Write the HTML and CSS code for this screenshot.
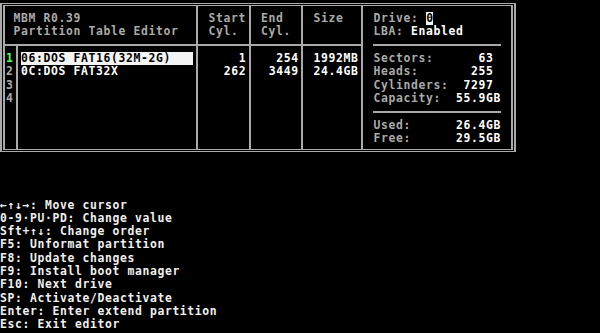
FILE: index.html
```html
<!DOCTYPE html>
<html>
<head>
<meta charset="utf-8">
<title>MBM Partition Table Editor</title>
<link rel="stylesheet" href="styles.css">
</head>
<body>
<div class="screen">
  <div class="frame">
    <div class="table">
      <div class="head title">MBM R0.39<br>Partition Table Editor</div>
      <div class="head divided start-h">Start<br>Cyl.</div>
      <div class="head divided end-h">End<br>Cyl.</div>
      <div class="head divided size-h">Size</div>

      <div class="cell nums">
        <div class="active">1</div>
        <div>2</div>
        <div>3</div>
        <div>4</div>
      </div>
      <div class="cell divided types">
        <div class="type selected">06:DOS FAT16(32M-2G)</div>
        <div class="type">0C:DOS FAT32X</div>
      </div>
      <div class="cell divided start">
        <div>1</div>
        <div>262</div>
      </div>
      <div class="cell divided end">
        <div>254</div>
        <div>3449</div>
      </div>
      <div class="cell divided size">
        <div>1992MB</div>
        <div>24.4GB</div>
      </div>
    </div>

    <div class="panel">
      <div class="line">Drive: <span class="cursor">0</span></div>
      <div class="line">LBA: <span class="bright">Enabled</span></div>
      <div class="rule"></div>
      <div class="stat"><span>Sectors:</span><span class="val int">63</span></div>
      <div class="stat"><span>Heads:</span><span class="val int">255</span></div>
      <div class="stat"><span>Cylinders:</span><span class="val int">7297</span></div>
      <div class="stat"><span>Capacity:</span><span class="val">55.9GB</span></div>
      <div class="rule"></div>
      <div class="stat"><span>Used:</span><span class="val">26.4GB</span></div>
      <div class="stat"><span>Free:</span><span class="val">29.5GB</span></div>
    </div>
  </div>

  <div class="help">
    <div>←↑↓→: Move cursor</div>
    <div>0-9·PU·PD: Change value</div>
    <div>Sft+↑↓: Change order</div>
    <div>F5: Unformat partition</div>
    <div>F8: Update changes</div>
    <div>F9: Install boot manager</div>
    <div>F10: Next drive</div>
    <div>SP: Activate/Deactivate</div>
    <div>Enter: Enter extend partition</div>
    <div>Esc: Exit editor</div>
  </div>
</div>
</body>
</html>
```

FILE: styles.css
```css
* {
  box-sizing: border-box;
  margin: 0;
  padding: 0;
}

html, body {
  background: #000;
}

body {
  width: 600px;
  height: 333px;
  overflow: hidden;
  font-family: "DejaVu Sans Mono", "Liberation Mono", monospace;
  font-weight: bold;
  font-size: 11.4px;
  letter-spacing: 0.637px;
  line-height: 13.32px;
  color: #aaaaaa;
}

.screen {
  width: 600px;
  height: 333px;
}

.frame {
  display: flex;
  width: 516px;
  margin-top: 3px;
  border-top: 3px double #aaaaaa;
  border-bottom: 3px double #aaaaaa;
  border-left: 5px double #aaaaaa;
  border-right: 5px double #aaaaaa;
}

.table {
  display: grid;
  grid-template-columns: 11px 180px 53px 52px 60px;
  grid-template-rows: 40px 103px;
  width: 356px;
}

.head {
  padding-top: 6.02px;
  border-bottom: 2px solid #aaaaaa;
  white-space: nowrap;
}

.title {
  grid-column: 1 / 3;
  padding-left: 8.5px;
}

.divided {
  border-left: 2px solid #aaaaaa;
}

.start-h { padding-left: 10.5px; }
.end-h { padding-left: 10px; }
.size-h { padding-left: 10.5px; }

.cell {
  padding-top: 5.98px;
  white-space: nowrap;
}

.nums {
  padding-left: 1px;
}

.nums .active {
  color: #55ff55;
}

.types {
  padding-left: 2.75px;
}

.type {
  width: 172.5px;
  padding-left: 0.25px;
  color: #ffffff;
}

.type.selected {
  background: #f4f4f4;
  color: #000;
}

.start {
  text-align: right;
  padding-right: 2.7px;
  color: #ffffff;
}

.end {
  text-align: right;
  padding-right: 2.2px;
  color: #ffffff;
}

.size {
  padding-left: 10.5px;
  color: #ffffff;
}

.panel {
  width: 150px;
  border-left: 2px solid #aaaaaa;
  padding: 6.02px 0 0 10.5px;
  white-space: nowrap;
}

.cursor {
  display: inline-block;
  width: 7.5px;
  padding-left: 0.3px;
  background: #f4f4f4;
  color: #000;
}

.bright {
  color: #ffffff;
}

.rule {
  height: 13.32px;
  padding-top: 5.5px;
}

.rule::before {
  content: "";
  display: block;
  width: 127.5px;
  height: 2px;
  margin-left: -0.25px;
  background: #aaaaaa;
}

.stat {
  display: grid;
  grid-template-columns: 82.5px 45px;
}

.val {
  color: #ffffff;
  text-align: right;
}

.val.int {
  padding-right: 7.5px;
}

.help {
  margin: 46.5px 0 0 0;
  color: #f0f0f0;
  white-space: nowrap;
}
```
